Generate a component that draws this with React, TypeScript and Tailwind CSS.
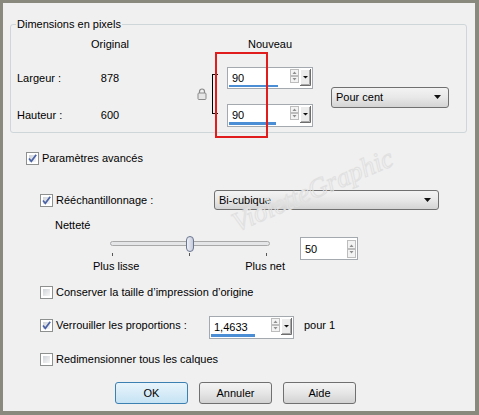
import React from "react";

const font = "font-['Liberation_Sans',Arial,sans-serif]";

function Check({ checked }: { checked: boolean }) {
  return (
    <span className="w-[13px] h-[13px] shrink-0 border border-[#8e8f8f] bg-white p-[2px] flex">
      <span className="flex-1 bg-gradient-to-br from-[#cfd3d8] to-[#f7f7f7] flex items-center justify-center">
        {checked && (
          <svg width="11" height="11" viewBox="0 0 11 11" className="-m-[2px]">
            <path d="M2 5.5 L4.3 8.3 L9.2 1.8" stroke="#4a62a6" strokeWidth="1.7" fill="none" />
          </svg>
        )}
      </span>
    </span>
  );
}

function CheckRow({ checked, label, className = "" }: { checked: boolean; label: string; className?: string }) {
  return (
    <div className={`flex items-center gap-[3px] h-[16px] ${className}`}>
      <Check checked={checked} />
      <span className="leading-[16px]">{label}</span>
    </div>
  );
}

function SpinArrows({ h = 14 }: { h?: number }) {
  const half = h / 2;
  return (
    <svg width="9" height={h} viewBox={`0 0 9 ${h}`} className="shrink-0">
      <rect x="0.5" y="0.5" width="8" height={half - 1} fill="#f3f3f3" stroke="#bdbdbd" />
      <rect x="0.5" y={half + 0.5} width="8" height={half - 1} fill="#f3f3f3" stroke="#bdbdbd" />
      <polygon points={`2.5,${half - 2} 4.5,${half - 4.5} 6.5,${half - 2}`} fill="#8e8e8e" />
      <polygon points={`2.5,${half + 2} 6.5,${half + 2} 4.5,${half + 4.5}`} fill="#8e8e8e" />
    </svg>
  );
}

function DropBtn() {
  return (
    <svg width="11" height="17" viewBox="0 0 11 17" className="shrink-0">
      <rect x="0" y="0" width="11" height="17" fill="#ececec" />
      <path d="M0.5 16.5 V0.5 H10.5" stroke="#ffffff" fill="none" />
      <path d="M0 16.5 H10.5 V0" stroke="#6e6e6e" fill="none" />
      <path d="M1 15.5 H9.5 V1" stroke="#a8a8a8" fill="none" />
      <polygon points="3,7 8,7 5.5,9.5" fill="#111" />
    </svg>
  );
}

function SpinBox({ value, w, h, bar }: { value: string; w: number; h: number; bar: number }) {
  return (
    <div
      className="flex border border-[#a4a9b0] bg-white shrink-0"
      style={{ width: w, height: h }}
    >
      <div className="flex-1 flex flex-col">
        <span className="pl-[4px] pt-[3px] leading-[14px]">{value}</span>
        <span className="mt-auto mb-[1px] ml-[1px] h-[3px] bg-[#4b8ed6]" style={{ width: bar }} />
      </div>
      <div className="flex items-start gap-[1px] pt-[1px] pr-[1px]">
        <SpinArrows />
        <DropBtn />
      </div>
    </div>
  );
}

function Select({ label, className }: { label: string; className: string }) {
  return (
    <div
      className={`flex items-center justify-between rounded-[3px] border border-[#707070] bg-gradient-to-b from-[#f3f3f3] via-[#e8e8e8] to-[#d4d4d4] pl-[4px] pr-[7px] ${className}`}
    >
      <span className="leading-[14px]">{label}</span>
      <svg width="7" height="4" viewBox="0 0 7 4">
        <polygon points="0,0 7,0 3.5,4" fill="#111" />
      </svg>
    </div>
  );
}

function Btn({ label, primary }: { label: string; primary?: boolean }) {
  return (
    <div
      className={`w-[73px] h-[22px] flex items-center justify-center rounded-[3px] border ${
        primary
          ? "border-[#3c7fb1] bg-gradient-to-b from-[#e8f4fb] to-[#c6e3f4]"
          : "border-[#707070] bg-gradient-to-b from-[#f4f4f4] via-[#e6e6e6] to-[#d2d2d2]"
      }`}
    >
      {label}
    </div>
  );
}

function Lock() {
  return (
    <svg width="10" height="12" viewBox="0 0 10 12">
      <path d="M2.5 5 V3.5 A2.5 2.5 0 0 1 7.5 3.5 V5" stroke="#8a8a8a" strokeWidth="1.2" fill="none" />
      <rect x="1" y="5" width="8" height="6.5" rx="1" fill="#e6e6e6" stroke="#8a8a8a" />
    </svg>
  );
}

export default function App() {
  return (
    <div className={`w-[479px] h-[415px] bg-[#8a897e] pt-[3px] pl-[3px] pr-[4px] pb-[4px] text-[11px] text-black ${font}`}>
      <div className="relative w-full h-full bg-[#f0f0f0] flex flex-col">
        {/* Dimensions group */}
        <fieldset className="ml-[7px] mt-[14px] w-[457px] rounded-[3px] border border-[#cfd6da] pb-[5px]">
          <legend className="ml-[5px] px-[1px] leading-[14px]">Dimensions en pixels</legend>
          <div className="ml-[6px] mt-[5px] grid grid-cols-[73px_40px_65px_14px_18px_86px_18px_118px] grid-rows-[16px_22px_23px] gap-y-[15px] items-center">
            <span className="col-start-2 text-center">Original</span>
            <span className="col-start-6 text-center">Nouveau</span>

            <span className="col-start-1 row-start-2">Largeur :</span>
            <span className="col-start-2 row-start-2 text-center">878</span>
            <span className="col-start-1 row-start-3">Hauteur :</span>
            <span className="col-start-2 row-start-3 text-center">600</span>

            <span className="col-start-4 row-start-2 row-span-2 self-start mt-[21px] ml-[2px] flex">
              <Lock />
            </span>
            <span className="col-start-5 row-start-2 row-span-2 self-start mt-[7px] ml-[3px] w-[6px] h-[40px] border-l border-t border-b border-black" />

            <div className="col-start-6 row-start-2">
              <SpinBox value="90" w={86} h={22} bar={49} />
            </div>
            <div className="col-start-6 row-start-3">
              <SpinBox value="90" w={86} h={23} bar={47} />
            </div>

            <div className="col-start-8 row-start-2 row-span-2">
              <Select label="Pour cent" className="h-[21px]" />
            </div>
          </div>
        </fieldset>

        {/* annotation frame */}
        <div className="absolute left-[212px] top-[49px] w-[53px] h-[86px] border-2 border-[#e01c1c] pointer-events-none" />

        <div className="ml-[23px] flex flex-col">
          <CheckRow checked label="Paramètres avancés" className="mt-[17px]" />

          <div className="mt-[24px] ml-[14px] flex items-center h-[20px]">
            <div className="w-[174px] flex items-center gap-[3px]">
              <Check checked />
              <span>Rééchantillonnage :</span>
            </div>
            <Select label="Bi-cubique" className="w-[225px] h-[20px]" />
          </div>

          <span className="mt-[8px] ml-[29px] leading-[14px]">Netteté</span>

          <div className="mt-[5px] flex items-start">
            <div className="ml-[67px] w-[192px] flex flex-col">
              <div className="relative h-[22px]">
                <span className="absolute left-[17px] top-[4px] w-[160px] h-[5px] rounded-full border border-[#a9a9a9] bg-[#e4e6e8]" />
                <span className="absolute left-[19px] top-[16px] w-px h-[3px] bg-[#555]" />
                <span className="absolute left-[96px] top-[16px] w-px h-[3px] bg-[#555]" />
                <span className="absolute left-[173px] top-[16px] w-px h-[3px] bg-[#555]" />
                <span className="absolute left-[93px] top-[-1px] w-[8px] h-[16px] rounded-full border border-[#6b7690] bg-gradient-to-r from-[#eef0f6] to-[#c6cbdb]" />
              </div>
              <div className="flex justify-between leading-[14px]">
                <span>Plus lisse</span>
                <span>Plus net</span>
              </div>
            </div>
            <div className="ml-[15px] w-[58px] h-[23px] flex border border-[#a4a9b0] bg-white">
              <span className="flex-1 pl-[4px] pt-[4px] leading-[14px]">50</span>
              <div className="pt-[2px] pr-[1px]">
                <SpinArrows h={18} />
              </div>
            </div>
          </div>

          <CheckRow checked={false} label="Conserver la taille d’impression d’origine" className="mt-[11px] ml-[14px]" />

          <div className="mt-[16px] ml-[14px] flex items-start">
            <div className="w-[169px] mt-[1px] flex items-center gap-[3px] h-[16px]">
              <Check checked />
              <span>Verrouiller les proportions :</span>
            </div>
            <SpinBox value="1,4633" w={85} h={23} bar={44} />
            <span className="ml-[10px] mt-[1px] leading-[16px]">pour 1</span>
          </div>

          <CheckRow checked={false} label="Redimensionner tous les calques" className="mt-[12px] ml-[14px]" />

          <div className="mt-[15px] ml-[89px] flex gap-[11px]">
            <Btn label="OK" primary />
            <Btn label="Annuler" />
            <Btn label="Aide" />
          </div>
        </div>

        {/* watermark */}
        <span className="absolute left-[222px] top-[172px] w-[175px] text-center -rotate-[23deg] font-['Liberation_Serif',serif] italic text-[27px] leading-[30px] text-transparent [-webkit-text-stroke:1px_#e0e0e0] pointer-events-none">
          VioletteGraphic
        </span>
      </div>
    </div>
  );
}
